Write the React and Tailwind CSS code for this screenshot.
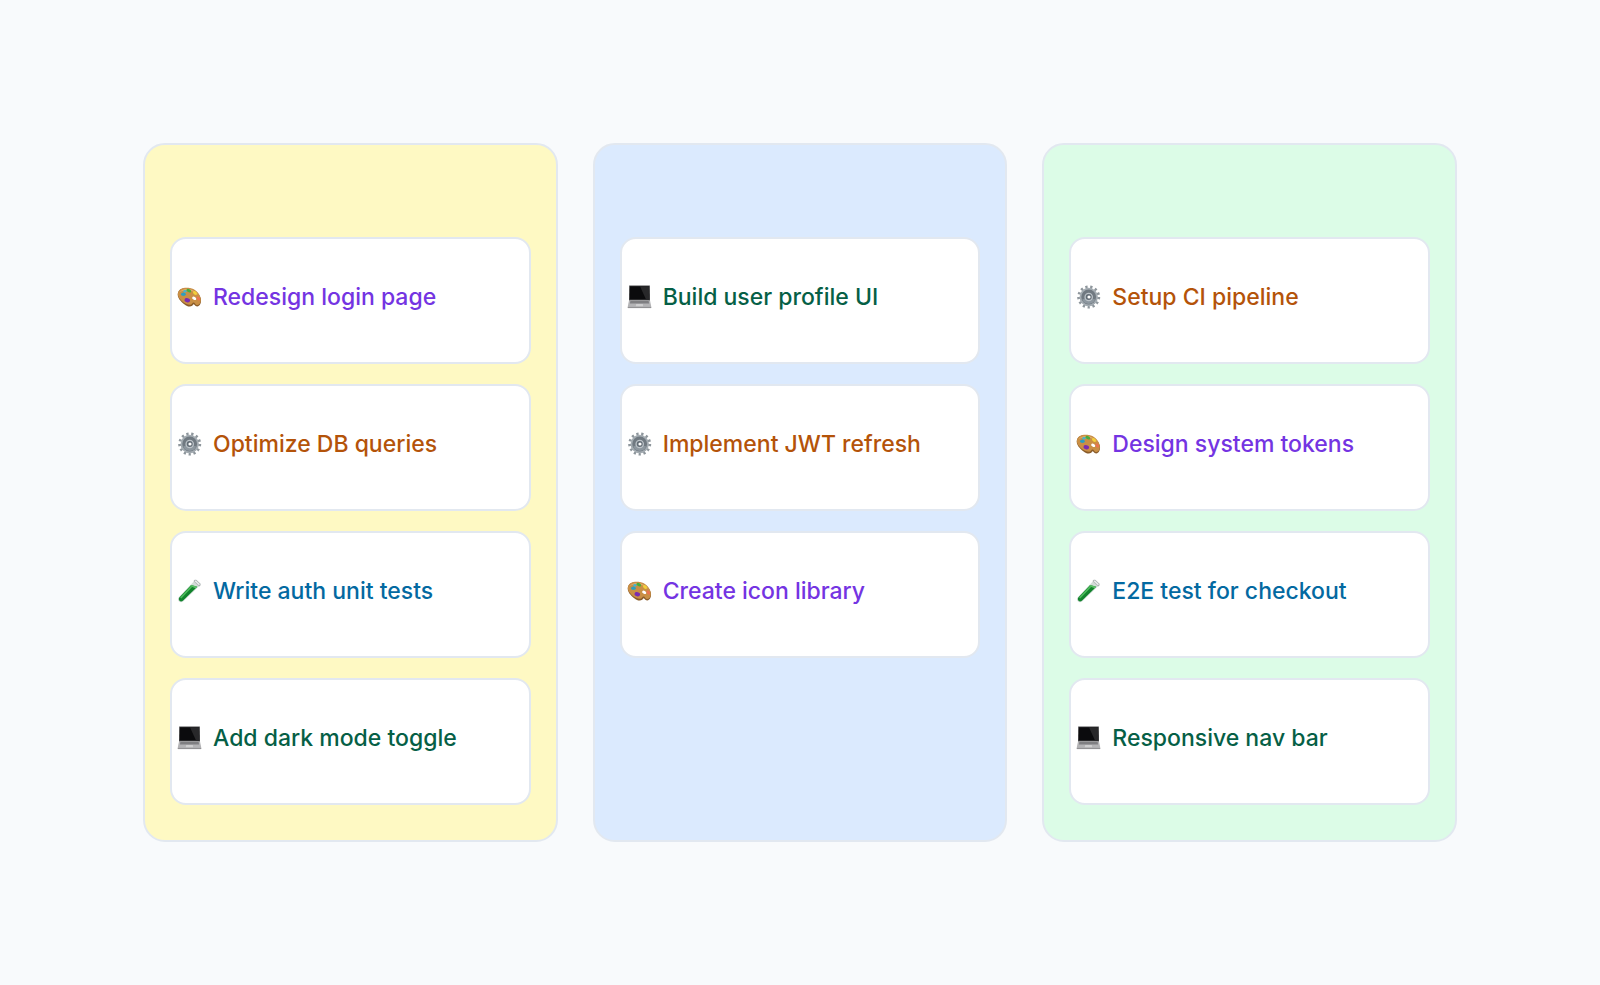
import React from "react";

const PaletteIcon = () => (
  <svg viewBox="0 0 26 26" className="size-[26px] shrink-0" aria-hidden="true">
    <path
      d="M.8 9.500C1.600 5.400 6 3.600 11.500 4.200c6 .6 11 5 12.300 10.400.7 3.200-.2 5.600-1.600 7-1.700 1.500-3.600.9-4.600-.6-.8-1.200-1.200-.9-1.800.1-1 1.800-3.600 2-6.800.3C5.300 19.300-.1 14.400.8 9.500Z"
      fill="#8a5c2a"
    />
    <path
      d="M1 8.900C1.900 5.100 6.200 3.200 11.500 3.800c5.900.6 10.800 4.800 12.100 10.200.7 3-.1 5.100-1.400 6.300-1.500 1.200-3.200.7-4.200-.9-.8-1.300-2.200-1.200-2.800.1-.9 1.700-3.300 1.800-6.300.2C5.200 17.900.1 13.300 1 8.900Z"
      fill="#c98f45"
    />
    <path d="M2.500 8.500C3.800 5.600 7.500 4.500 11.500 5c4.500.5 8.300 3 10.500 6.500-3.500-3.600-7.200-5-11-5.300-3.500-.3-6.500.5-8.500 2.300Z" fill="#dfae69" />
    <ellipse cx="17.200" cy="14.300" rx="2.200" ry="1.500" transform="rotate(30 17.200 14.300)" fill="#fff" />
    <ellipse cx="6.400" cy="10.300" rx="2.400" ry="1.700" fill="#2b9fc0" />
    <ellipse cx="8" cy="7.300" rx="1.600" ry="1.200" fill="#45b4cf" />
    <ellipse cx="11.800" cy="6.600" rx="2.500" ry="1.600" transform="rotate(25 11.800 6.600)" fill="#46ad3c" />
    <ellipse cx="18" cy="9" rx="2.300" ry="1.500" transform="rotate(40 18 9)" fill="#f2cf3a" />
    <ellipse cx="21.300" cy="14.600" rx="2.300" ry="1.500" transform="rotate(60 21.300 14.600)" fill="#ea7450" />
    <ellipse cx="10.300" cy="16.200" rx="2.800" ry="2.100" transform="rotate(15 10.300 16.200)" fill="#7a2cb0" />
  </svg>
);

const GearIcon = () => (
  <svg viewBox="0 0 26 26" className="size-[26px] shrink-0" aria-hidden="true">
    <circle cx="12.700" cy="13" r="10" fill="none" stroke="#8e969c" strokeWidth="3" strokeDasharray="2.200 2.633" />
    <circle cx="12.700" cy="13" r="9.200" fill="#a4acb2" />
    <circle cx="12.700" cy="13" r="7.400" fill="#707981" />
    <path d="M6.200 15.500a7 7 0 0 0 13 0l-3.600-.9H9.500Z" fill="#8d979f" />
    <circle cx="12.700" cy="13" r="4.300" fill="#bcc3c8" />
    <circle cx="12.700" cy="13" r="3" fill="#626c75" />
    <circle cx="13" cy="13" r="1.600" fill="#fff" />
  </svg>
);

const TestTubeIcon = () => (
  <svg viewBox="0 0 26 26" className="size-[26px] shrink-0" aria-hidden="true">
    <path d="M17 3.300 22.300 8 6.300 23.200c-1.200 1.200-3.100 1.300-4.300.2s-1.200-3.200 0-4.500Z" fill="#d3dcd8" />
    <path d="M14.200 7.100 20.300 8.700 5.900 22.700c-1 .9-2.500 1-3.400.1s-.9-2.500 0-3.500Z" fill="#11832c" />
    <path d="M13.600 8.300 15.200 8.900 4.300 20.400 3.100 19.400Z" fill="#4dbb5c" />
    <path d="M14.200 7.100 20.300 8.700 18.700 10.200 13.100 8.300Z" fill="#5cc067" />
    <path d="M16.600 3.300c.3-1.400 1.700-1.900 3-1.200l3.700 3.500c.8 1.200.2 2.700-1.200 2.800Z" fill="#a9b0b1" />
    <path d="M17.600 3.300c.4-.8 1.200-.9 1.900-.4l3 2.900c.4.700.1 1.300-.6 1.500Z" fill="#eceeee" />
  </svg>
);

const LaptopIcon = () => (
  <svg viewBox="0 0 26 26" className="size-[26px] shrink-0" aria-hidden="true">
    <path d="M2.200 1.500h20.600l.2 15.500H2Z" fill="#4a4a4c" />
    <path d="M2.900 2.200h19.200l.2 13.300H2.700Z" fill="#0b0b0d" />
    <path d="M13 2.200h9.100l.2 13.300h-3.300Z" fill="#28282a" />
    <path d="M2 16.300h21l1.300 6.700H.7Z" fill="#b4b4b6" />
    <path d="M3.400 17h18.200l.5 2.500H2.900Z" fill="#7f7f82" />
    <path d="M9.200 20h6.600l.4 2.200H8.800Z" fill="#cececf" />
    <path d="M.7 22.900h23.600v1.200H.7Z" fill="#929294" />
  </svg>
);

const CATEGORIES = {
  design: { icon: PaletteIcon, text: "text-[#7434e2]" },
  backend: { icon: GearIcon, text: "text-[#b45309]" },
  testing: { icon: TestTubeIcon, text: "text-[#0369a1]" },
  frontend: { icon: LaptopIcon, text: "text-[#065f46]" },
};

const COLUMNS = [
  {
    id: "todo",
    bg: "bg-[#fef9c3]",
    tasks: [
      { title: "Redesign login page", category: "design" },
      { title: "Optimize DB queries", category: "backend" },
      { title: "Write auth unit tests", category: "testing" },
      { title: "Add dark mode toggle", category: "frontend" },
    ],
  },
  {
    id: "progress",
    bg: "bg-[#dbeafe]",
    tasks: [
      { title: "Build user profile UI", category: "frontend" },
      { title: "Implement JWT refresh", category: "backend" },
      { title: "Create icon library", category: "design" },
    ],
  },
  {
    id: "done",
    bg: "bg-[#dcfce7]",
    tasks: [
      { title: "Setup CI pipeline", category: "backend" },
      { title: "Design system tokens", category: "design" },
      { title: "E2E test for checkout", category: "testing" },
      { title: "Responsive nav bar", category: "frontend" },
    ],
  },
];

const TaskCard = ({ task }) => {
  const { icon: Icon, text } = CATEGORIES[task.category];

  return (
    <li className="flex items-center gap-[10px] rounded-2xl border-2 border-[#e2e8f0] bg-white px-[5px] pt-[41px] pb-12">
      <Icon />
      <span className={`text-[23px] leading-[34px] font-medium ${text}`}>{task.title}</span>
    </li>
  );
};

const App = () => {
  return (
    <main className="min-h-screen bg-[#f8fafc] p-[143px] font-['Inter',sans-serif]">
      <div className="grid grid-cols-3 gap-[35px]">
        {COLUMNS.map((column) => (
          <section key={column.id} className={`rounded-[22px] border-2 border-[#e2e8f0] px-[25px] pt-[92px] pb-[35px] ${column.bg}`}>
            <ul className="flex flex-col gap-5">
              {column.tasks.map((task) => (
                <TaskCard key={task.title} task={task} />
              ))}
            </ul>
          </section>
        ))}
      </div>
    </main>
  );
};

export default App;
